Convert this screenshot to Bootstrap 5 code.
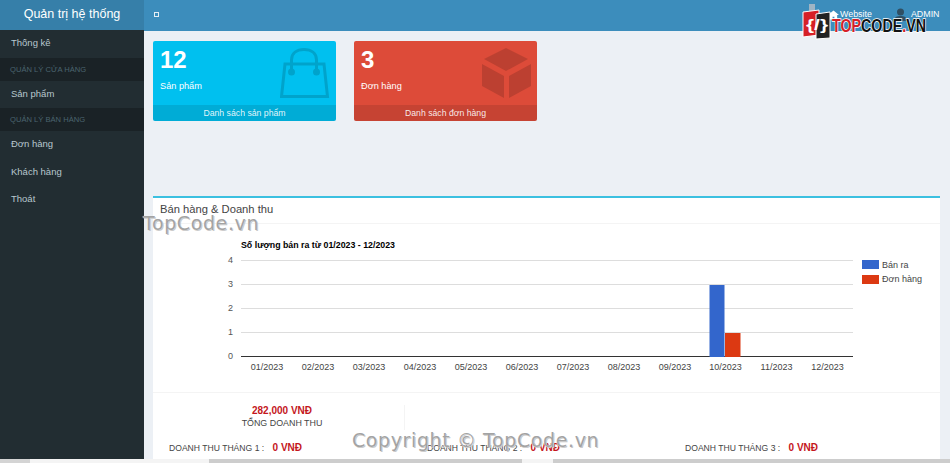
<!DOCTYPE html>
<html lang="vi">
<head>
    <meta charset="UTF-8">
    <meta name="viewport" content="width=device-width, initial-scale=1.0">
    <title>Quản trị hệ thống</title>
    <link href="https://cdn.jsdelivr.net/npm/bootstrap@5.3.0/dist/css/bootstrap.min.css" rel="stylesheet">
    <style>
        html, body { height: 100%; overflow: hidden; }
        body { font-family: "Liberation Sans", Arial, sans-serif; background: #ecf0f5; color: #444; font-size: 10px; }
        .page-wrap { height: 459px; overflow: hidden; }
        .side-col { width: 144px; background: #222d32; flex: none; }
        .side-logo { height: 30px; background: #367fa9; color: #fff; font-size: 12.5px; line-height: 29px; text-align: center; }
        .side-link { display: block; height: 27.5px; line-height: 26.5px; padding-left: 11px; color: #b8c7ce; font-size: 9.5px; text-decoration: none; }
        .side-head { height: 23px; line-height: 23px; padding-left: 10px; background: #1a2226; color: #4b646f; font-size: 7.6px; }
        .top-bar { height: 31px; background: #3c8dbc; color: #fff; padding: 12px 0 0 10px; }
        .toggle-box { width: 5px; height: 5px; border: 1px solid #e4eef5; }
        .top-links { top: 8px; left: 684px; font-size: 8.9px; }
        .top-site { margin-left: 1px; }
        .top-user { margin-left: 22px; }
        .stat-box { width: 183px; height: 80px; color: #fff; border-radius: 2px; overflow: hidden; }
        .stat-info { background: #00c0ef; }
        .stat-danger { background: #dd4b39; }
        .stat-body { height: 64px; padding: 6px 7px; }
        .stat-num { font-size: 24px; font-weight: 700; line-height: 25px; }
        .stat-label { font-size: 9.2px; margin-top: 8px; line-height: 12px; }
        .stat-icon { top: 7px; right: 6px; }
        .stat-foot { height: 16px; line-height: 16px; text-align: center; font-size: 8.7px; background: rgba(0,0,0,.1); color: rgba(255,255,255,.9); }
        .stat-row { gap: 18px; padding: 10px 0 0 9px; height: 165px; }
        .report-panel { margin: 0 10px 0 9px; background: #fff; border-top: 2px solid #3bc0e0; }
        .panel-title { height: 26px; line-height: 22px; padding-left: 7px; font-size: 11.2px; color: #444; border-bottom: 1px solid #f4f4f4; }
        .chart-svg { display: block; }
        .chart-svg text { font-family: "Liberation Sans", Arial, sans-serif; font-size: 9px; fill: #444; }
        .chart-svg .y-tick { fill: #555; text-anchor: end; }
        .chart-svg .x-tick { text-anchor: middle; }
        .chart-svg .chart-name { font-weight: 700; fill: #000; font-size: 8.8px; }
        .sum-area { border-top: 1px solid #f4f4f4; height: 70px; }
        .sum-total { width: 252px; height: 25px; margin-top: 12px; padding-left: 7px; text-align: center; border-right: 1px solid #f4f4f4; line-height: 12px; font-size: 8.9px; }
        .money { color: #c4161c; font-weight: 700; font-size: 10px; }
        .month-row { margin-top: 11px; font-size: 8.6px; line-height: 13px; }
        .month-cell { width: 258px; padding-left: 16px; white-space: nowrap; }
        .month-cell .money { margin-left: 6px; }
        .scroll-track { height: 4px; background: linear-gradient(90deg, #d4d4d4 30px, #f4f4f4 30px, #f4f4f4 209px, #cdcdcd 209px, #cdcdcd 522px, #f4f4f4 522px, #f4f4f4 553px, #cdcdcd 553px); }
        .mark-text { font-size: 19px; color: #a3a3a3; font-family: "DejaVu Sans", sans-serif; letter-spacing: .6px; line-height: 22px; text-shadow: 0 0 1px #fff, 1px 1px 0 #c8c8c8; white-space: nowrap; pointer-events: none; }
        .mark-top { top: 212px; left: 143px; }
        .mark-copy { top: 429px; left: 352px; }
        .logo-mark { top: 3px; left: 802px; }
        .logo-mark text { font-family: "Liberation Sans", Arial, sans-serif; font-weight: 700; }
        .logo-word { font-size: 19px; paint-order: stroke; stroke: #fff; stroke-width: 1.5px; }
        .logo-code { font-size: 14px; fill: #fff; }
    </style>
</head>
<body>
    <div class="page-wrap d-flex">
        <!-- Menu trai -->
        <div class="side-col">
            <div class="side-logo">Quản trị hệ thống</div>
            <a class="side-link" href="#">Thống kê</a>
            <div class="side-head">QUẢN LÝ CỬA HÀNG</div>
            <a class="side-link" href="#">Sản phẩm</a>
            <div class="side-head">QUẢN LÝ BÁN HÀNG</div>
            <a class="side-link" href="#">Đơn hàng</a>
            <a class="side-link" href="#">Khách hàng</a>
            <a class="side-link" href="#">Thoát</a>
        </div>

        <div class="flex-grow-1">
            <div class="top-bar position-relative">
                <div class="toggle-box"></div>
                <div class="top-links position-absolute d-flex align-items-center">
                    <svg width="11" height="10" viewBox="0 0 12 10"><path d="M6 0 12 5H10V10H7V7H5V10H2V5H0Z" fill="#fff"/></svg>
                    <span class="top-site">Website</span>
                    <svg class="top-user" width="13" height="13" viewBox="0 0 13 13"><circle cx="6.500" cy="4" r="3.500" fill="#2f4f63"/><path d="M0 13C0 9 3 8 6.500 8S13 9 13 13Z" fill="#2f4f63"/></svg>
                    <span class="ms-1">ADMIN</span>
                </div>
            </div>

            <div class="stat-row d-flex align-items-start">
                <div class="stat-box stat-info">
                    <div class="stat-body position-relative">
                        <div class="stat-num">12</div>
                        <div class="stat-label">Sản phẩm</div>
                        <svg class="stat-icon position-absolute" width="50" height="52" viewBox="0 0 50 52" fill="none" stroke="#00a3cb" stroke-width="3">
                            <path d="M5 16H44L47.500 48.500H1.500Z"/>
                            <path d="M11.500 24V12C11.500 5 17 1.500 24 1.500S36.500 5 36.500 12V24"/>
                            <circle cx="11.500" cy="24" r="2" fill="#00a3cb"/>
                            <circle cx="36.500" cy="24" r="2" fill="#00a3cb"/>
                        </svg>
                    </div>
                    <div class="stat-foot">Danh sách sản phẩm</div>
                </div>
                <div class="stat-box stat-danger">
                    <div class="stat-body position-relative">
                        <div class="stat-num">3</div>
                        <div class="stat-label">Đơn hàng</div>
                        <svg class="stat-icon position-absolute" width="50" height="52" viewBox="0 0 50 52" fill="#bc4031">
                            <path d="M25 0 47 11 25 23 3 11Z"/>
                            <path d="M1 16 23 28V50L1 38Z"/>
                            <path d="M50 16 28 28V50L50 38Z"/>
                        </svg>
                    </div>
                    <div class="stat-foot">Danh sách đơn hàng</div>
                </div>
            </div>

            <div class="report-panel">
                <div class="panel-title">Bán hàng &amp; Doanh thu</div>
                <!-- Bieu do -->
                <svg class="chart-svg" width="787" height="168" viewBox="0 0 787 168">
                    <text class="chart-name" x="88" y="24">Số lượng bán ra từ 01/2023 - 12/2023</text>
                    <path d="M88 36.500H700M88 60.500H700M88 84.500H700M88 108.500H700" stroke="#ddd"/>
                    <path d="M88 132.500H700" stroke="#333"/>
                    <text class="y-tick" x="80" y="39">4</text>
                    <text class="y-tick" x="80" y="63">3</text>
                    <text class="y-tick" x="80" y="87">2</text>
                    <text class="y-tick" x="80" y="111">1</text>
                    <text class="y-tick" x="80" y="135">0</text>
                    <rect x="556.500" y="61" width="15" height="72" fill="#3366cc"/>
                    <rect x="572" y="109" width="15.500" height="24" fill="#dc3912"/>
                    <text class="x-tick" x="114" y="146">01/2023</text>
                    <text class="x-tick" x="165" y="146">02/2023</text>
                    <text class="x-tick" x="216" y="146">03/2023</text>
                    <text class="x-tick" x="267" y="146">04/2023</text>
                    <text class="x-tick" x="318" y="146">05/2023</text>
                    <text class="x-tick" x="369" y="146">06/2023</text>
                    <text class="x-tick" x="420" y="146">07/2023</text>
                    <text class="x-tick" x="471" y="146">08/2023</text>
                    <text class="x-tick" x="522" y="146">09/2023</text>
                    <text class="x-tick" x="572.500" y="146">10/2023</text>
                    <text class="x-tick" x="623.500" y="146">11/2023</text>
                    <text class="x-tick" x="674.500" y="146">12/2023</text>
                    <rect x="709" y="36" width="17" height="9" fill="#3366cc"/>
                    <text x="729" y="44">Bán ra</text>
                    <rect x="709" y="51" width="17" height="9" fill="#dc3912"/>
                    <text x="729" y="58">Đơn hàng</text>
                </svg>
                <div class="sum-area">
                    <div class="sum-total">
                        <div class="money">282,000 VNĐ</div>
                        <div>TỔNG DOANH THU</div>
                    </div>
                    <div class="month-row d-flex">
                        <div class="month-cell">DOANH THU THÁNG 1 : <span class="money">0 VNĐ</span></div>
                        <div class="month-cell">DOANH THU THÁNG 2 : <span class="money">0 VNĐ</span></div>
                        <div class="month-cell">DOANH THU THÁNG 3 : <span class="money">0 VNĐ</span></div>
                    </div>
                </div>
            </div>
        </div>
    </div>
    <div class="scroll-track"></div>

    <!-- Watermark -->
    <div class="mark-text position-absolute mark-top">TopCode.vn</div>
    <div class="mark-text position-absolute mark-copy">Copyright © TopCode.vn</div>
    <svg class="logo-mark position-absolute" width="126" height="37" viewBox="0 0 126 37">
        <rect x="7" y="1" width="6" height="7" fill="#9fb4c4"/>
        <path d="M1 9 17 7V32L1 34Z" fill="#d62027" stroke="#fff"/>
        <path d="M14 11 28 9V35L14 36Z" fill="#222" stroke="#fff"/>
        <text class="logo-code" x="4" y="27" textLength="22" lengthAdjust="spacingAndGlyphs">{/}</text>
        <text class="logo-word" x="30" y="29" textLength="94" lengthAdjust="spacingAndGlyphs"><tspan fill="#d62027">TOP</tspan><tspan fill="#111">CODE</tspan><tspan fill="#d62027">.</tspan><tspan fill="#111">VN</tspan></text>
    </svg>

    <script src="https://cdn.jsdelivr.net/npm/bootstrap@5.3.0/dist/js/bootstrap.bundle.min.js"></script>
</body>
</html>
